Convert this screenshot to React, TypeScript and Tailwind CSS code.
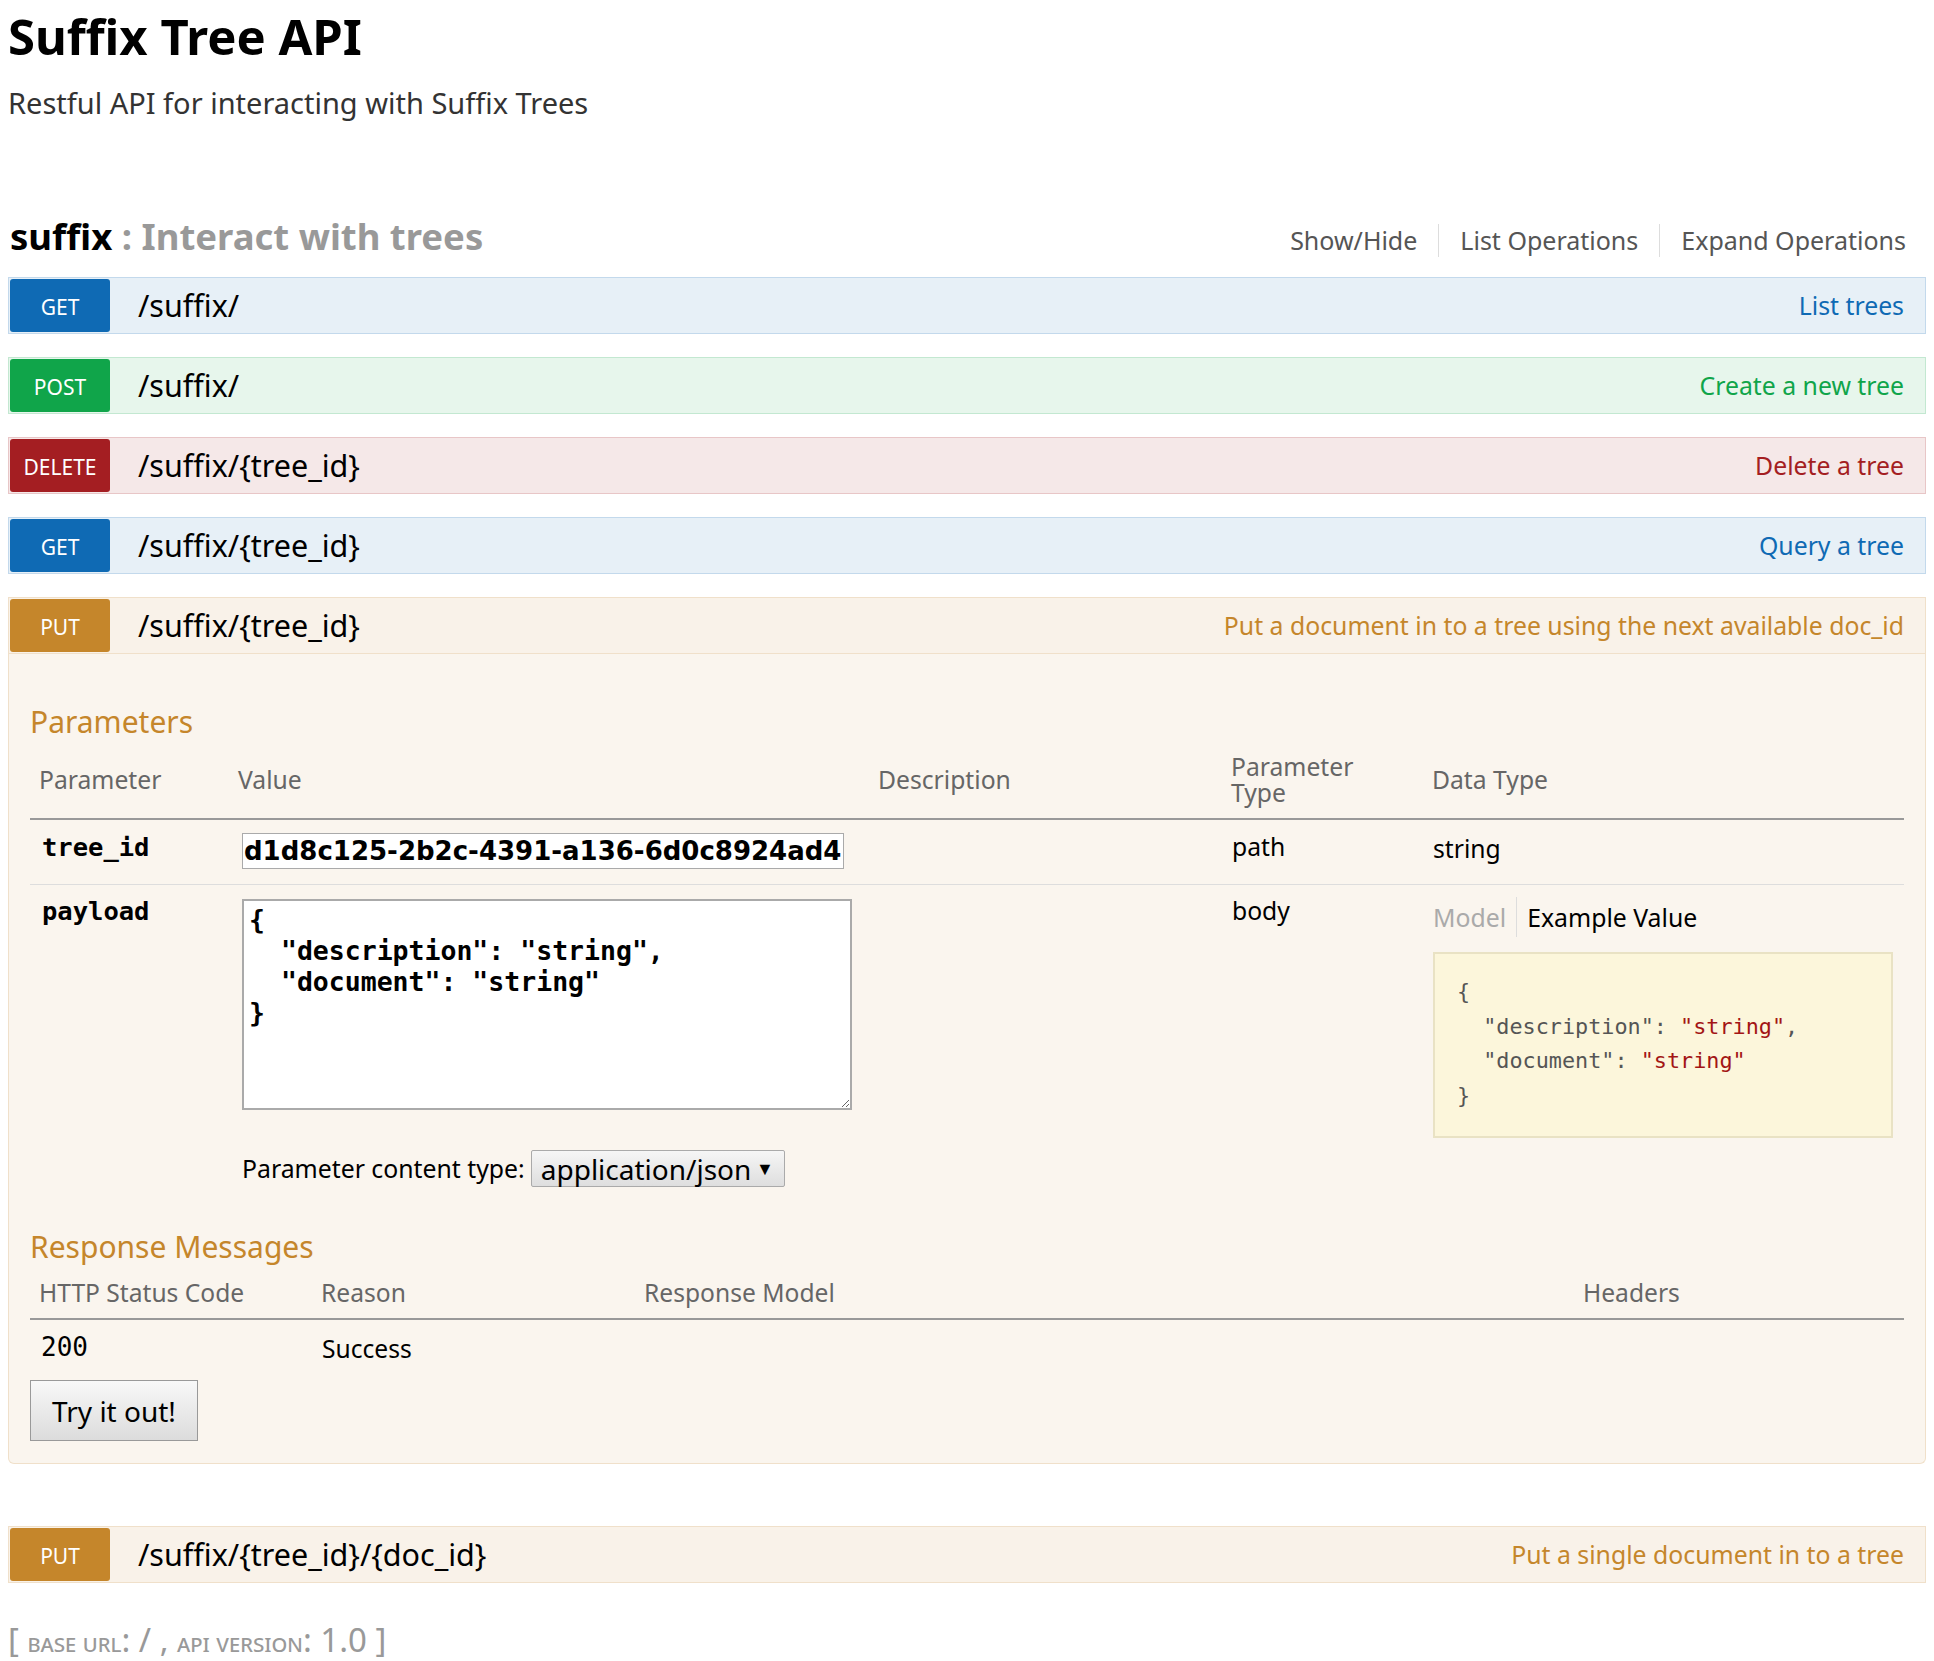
import React from "react";

type Method = "get" | "post" | "delete" | "put";

const methodStyles: Record<Method, { badge: string; bar: string; summary: string }> = {
  get: { badge: "bg-[#0f6ab4]", bar: "bg-[#e7f0f7] border-[#c3d9ec]", summary: "text-[#0f6ab4]" },
  post: { badge: "bg-[#10a54a]", bar: "bg-[#e7f6ec] border-[#c3e8d1]", summary: "text-[#10a54a]" },
  delete: { badge: "bg-[#a41e22]", bar: "bg-[#f5e8e8] border-[#e8c6c7]", summary: "text-[#a41e22]" },
  put: { badge: "bg-[#c5862b]", bar: "bg-[#f9f2e9] border-[#f0e0ca]", summary: "text-[#c5862b]" },
};

function OperationBar({ method, path, summary, last = "mb-[23px]" }: { method: Method; path: string; summary: string; last?: string }) {
  const s = methodStyles[method];
  return (
    <div className={`flex h-[57px] items-center border p-px ${s.bar} ${last}`}>
      <span className={`flex h-full w-[100px] items-center justify-center rounded-[3px] pt-[4px] text-[21px] leading-none text-white uppercase ${s.badge}`}>
        {method}
      </span>
      <span className="ml-[28px] flex-1 text-[30.5px] leading-none text-black">{path}</span>
      <span className={`pr-[20px] text-[24.8px] leading-none ${s.summary}`}>{summary}</span>
    </div>
  );
}

export default function App() {
  return (
    <div className="min-h-screen bg-white px-2 font-['Noto_Sans',sans-serif] text-[#333]">
      {/* info header */}
      <div className="pt-[12px]">
        <h1 className="text-[49px] leading-none font-bold text-black">Suffix Tree API</h1>
        <p className="mt-[27px] text-[29px] leading-none text-[#333]">Restful API for interacting with Suffix Trees</p>
      </div>

      {/* resource heading */}
      <div className="mt-[101px] flex items-baseline justify-between">
        <h2 className="pl-[2px] text-[36.5px] leading-none font-bold">
          <span className="text-black">suffix</span>
          <span className="text-[#999]"> : Interact with trees</span>
        </h2>
        <div className="flex items-center pr-[20px] text-[25px] leading-none text-[#555]">
          <span>Show/Hide</span>
          <span className="mx-[21px] h-[33px] w-px bg-[#ddd]" />
          <span>List Operations</span>
          <span className="mx-[21px] h-[33px] w-px bg-[#ddd]" />
          <span>Expand Operations</span>
        </div>
      </div>

      <div className="mt-[20px]">
        <OperationBar method="get" path="/suffix/" summary="List trees" />
        <OperationBar method="post" path="/suffix/" summary="Create a new tree" />
        <OperationBar method="delete" path="/suffix/{tree_id}" summary="Delete a tree" />
        <OperationBar method="get" path="/suffix/{tree_id}" summary="Query a tree" />
        <OperationBar method="put" path="/suffix/{tree_id}" summary="Put a document in to a tree using the next available doc_id" last="" />

        {/* expanded content */}
        <div className="mb-[62px] rounded-b-[6px] border-x border-b border-[#f0e0ca] bg-[#faf5ee] px-[21px] pt-[53px] pb-[22px]">
          <h4 className="text-[30px] leading-none text-[#c5862b]">Parameters</h4>

          <div className="mt-[17px] grid grid-cols-[199px_640px_353px_201px_1fr] text-[24.7px]">
            <div className="col-span-5 grid grid-cols-subgrid items-center border-b-2 border-[#999] pb-[12px] leading-[26px] text-[#666]">
              <div className="pl-[9px]">Parameter</div>
              <div className="pl-[9px]">Value</div>
              <div className="pl-[9px]">Description</div>
              <div className="pl-[9px]">Parameter<br />Type</div>
              <div className="pl-[9px]">Data Type</div>
            </div>

            <div className="col-span-5 grid grid-cols-subgrid border-b border-[#ddd] pt-[13px] pb-[15px] text-black">
              <div className="pl-[12px] font-['DejaVu_Sans_Mono',monospace] text-[25.5px] leading-[28px] font-bold">tree_id</div>
              <div className="pl-[13px]">
                <input
                  readOnly
                  value="d1d8c125-2b2c-4391-a136-6d0c8924ad4a"
                  className="block h-[36px] w-[602px] border border-[#aaa] bg-white px-[1px] font-['DejaVu_Sans',sans-serif] text-[26px] font-bold text-black outline-none"
                />
              </div>
              <div />
              <div className="pl-[10px] leading-[28px]">path</div>
              <div className="pl-[10px] leading-[32px]">string</div>
            </div>

            <div className="col-span-5 grid grid-cols-subgrid pt-[14px] text-black">
              <div className="pl-[12px] font-['DejaVu_Sans_Mono',monospace] text-[25.5px] leading-[24px] font-bold">payload</div>
              <div className="col-span-2 pl-[13px]">
                <textarea
                  readOnly
                  defaultValue={'{\n  "description": "string",\n  "document": "string"\n}'}
                  className="block h-[211px] w-[610px] resize border-2 border-[#aaa] bg-white px-[5px] pt-[3px] font-['DejaVu_Sans_Mono',monospace] text-[26.5px] leading-[31px] font-bold text-black outline-none"
                />
                <div className="mt-[40px] flex items-center">
                  <span className="mr-[6px] text-[24.8px]">Parameter content type:</span>
                  <div className="flex h-[37px] w-[254px] items-center justify-between rounded-[2px] border border-[#aaa] bg-gradient-to-b from-[#f6f6f6] to-[#dedede] pr-[10px] pl-[9px] text-[28px]">
                    <span>application/json</span>
                    <span className="text-[18px]">▼</span>
                  </div>
                </div>
              </div>
              <div className="col-start-4 pl-[10px] leading-[24px]">body</div>
              <div className="col-start-5 pl-[10px]">
                <div className="-mt-[2px] flex items-center leading-[38px] text-[24.8px]">
                  <span className="text-[#aaa]">Model</span>
                  <span className="mx-[10px] h-[40px] w-px bg-[#ddd]" />
                  <span>Example Value</span>
                </div>
                <pre className="mt-[15px] mr-[11px] border-2 border-[#e9e2c4] bg-[#fcf6db] px-[22px] pt-[21px] pb-[23px] font-['DejaVu_Sans_Mono',monospace] text-[21.8px] leading-[34.5px] text-[#555]">
                  {"{\n  "}
                  {'"description": '}
                  <span className="text-[#a31515]">"string"</span>
                  {",\n  "}
                  {'"document": '}
                  <span className="text-[#a31515]">"string"</span>
                  {"\n}"}
                </pre>
              </div>
            </div>
          </div>

          <h4 className="mt-[45px] text-[30px] leading-none text-[#c5862b]">Response Messages</h4>

          <div className="mt-[16px] grid grid-cols-[282px_323px_939px_1fr] text-[24.6px]">
            <div className="col-span-4 grid grid-cols-subgrid border-b-2 border-[#999] pb-[10px] leading-[30px] text-[#666]">
              <div className="pl-[9px]">HTTP Status Code</div>
              <div className="pl-[9px]">Reason</div>
              <div className="pl-[9px]">Response Model</div>
              <div className="pl-[9px]">Headers</div>
            </div>
            <div className="col-span-4 grid grid-cols-subgrid pt-[12px] leading-[30px] text-black">
              <div className="pl-[11px] font-['DejaVu_Sans_Mono',monospace] text-[26px]">200</div>
              <div className="pl-[10px] leading-[34px]">Success</div>
              <div />
              <div />
            </div>
          </div>

          <button className="mt-[14px] block h-[61px] w-[168px] border border-[#999] bg-gradient-to-b from-[#f8f8f8] to-[#dcdcdc] text-[28px] text-black">
            Try it out!
          </button>
        </div>

        <OperationBar method="put" path="/suffix/{tree_id}/{doc_id}" summary="Put a single document in to a tree" last="" />
      </div>

      <div className="mt-[40px] pb-[10px] text-[33px] leading-none text-[#999]">
        [ <span className="text-[25px] [font-variant:small-caps]">base url</span>: / , <span className="text-[25px] [font-variant:small-caps]">api version</span>: 1.0 ]
      </div>
    </div>
  );
}
